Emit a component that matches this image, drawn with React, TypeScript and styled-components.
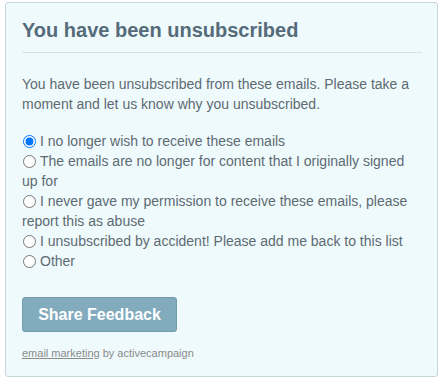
import React, { useState } from 'react'
import styled, { createGlobalStyle } from 'styled-components'

const reasons = [
	'I no longer wish to receive these emails',
	'The emails are no longer for content that I originally signed up for',
	'I never gave my permission to receive these emails, please report this as abuse',
	'I unsubscribed by accident! Please add me back to this list',
	'Other',
]

const App: React.FC = () => {
	const [choice, setChoice] = useState(0)

	return (
		<>
			<GlobalStyle />
			<StyledPage>
				<StyledCard>
					<StyledTitle>You have been unsubscribed</StyledTitle>
					<StyledIntro>
						You have been unsubscribed from these emails. Please take a moment and let us know why you
						unsubscribed.
					</StyledIntro>
					<StyledReasons>
						{reasons.map((reason, i) => (
							<StyledReason key={reason}>
								<StyledRadio
									type="radio"
									name="reason"
									checked={choice === i}
									onChange={() => setChoice(i)}
								/>
								{reason}
							</StyledReason>
						))}
					</StyledReasons>
					<StyledButton type="button">Share Feedback</StyledButton>
					<StyledCredit>
						<a href="#">email marketing</a> by activecampaign
					</StyledCredit>
				</StyledCard>
			</StyledPage>
		</>
	)
}

const GlobalStyle = createGlobalStyle`
	body {
		margin: 0;
		background: #ffffff;
		font-family: 'Liberation Sans', Arial, sans-serif;
	}
`

const StyledPage = styled.div`
	padding: 2px 9px 0 5px;
`

const StyledCard = styled.div`
	background: #effafd;
	border: 1px solid #c8d5db;
	border-radius: 3px;
	padding: 16px 15px 16px 16px;
	color: #5e6a72;
`

const StyledTitle = styled.h1`
	margin: 0 0 21px;
	padding-bottom: 10px;
	border-bottom: 1px solid #d5e1e6;
	font-size: 20px;
	line-height: 23px;
	font-weight: bold;
	color: #566b79;
`

const StyledIntro = styled.p`
	margin: 0 0 17px;
	font-size: 14px;
	line-height: 20px;
`

const StyledReasons = styled.div`
	display: flex;
	flex-direction: column;
	margin-bottom: 26px;
`

const StyledReason = styled.label`
	display: block;
	font-size: 14px;
	line-height: 20px;
`

const StyledRadio = styled.input`
	width: 13px;
	height: 13px;
	margin: 0 4px 0 1px;
	vertical-align: -2px;
`

const StyledButton = styled.button`
	display: block;
	width: 155px;
	height: 35px;
	padding: 0;
	background: #82abbd;
	border: 1px solid #739cad;
	border-radius: 3px;
	color: #ffffff;
	font-family: 'Liberation Sans', Arial, sans-serif;
	font-size: 16px;
	font-weight: bold;
	cursor: pointer;
`

const StyledCredit = styled.div`
	margin-top: 15px;
	font-size: 11px;
	line-height: 13px;
	color: #8a8a8a;

	a {
		color: #8a8a8a;
		text-decoration: underline;
	}
`

export default App
